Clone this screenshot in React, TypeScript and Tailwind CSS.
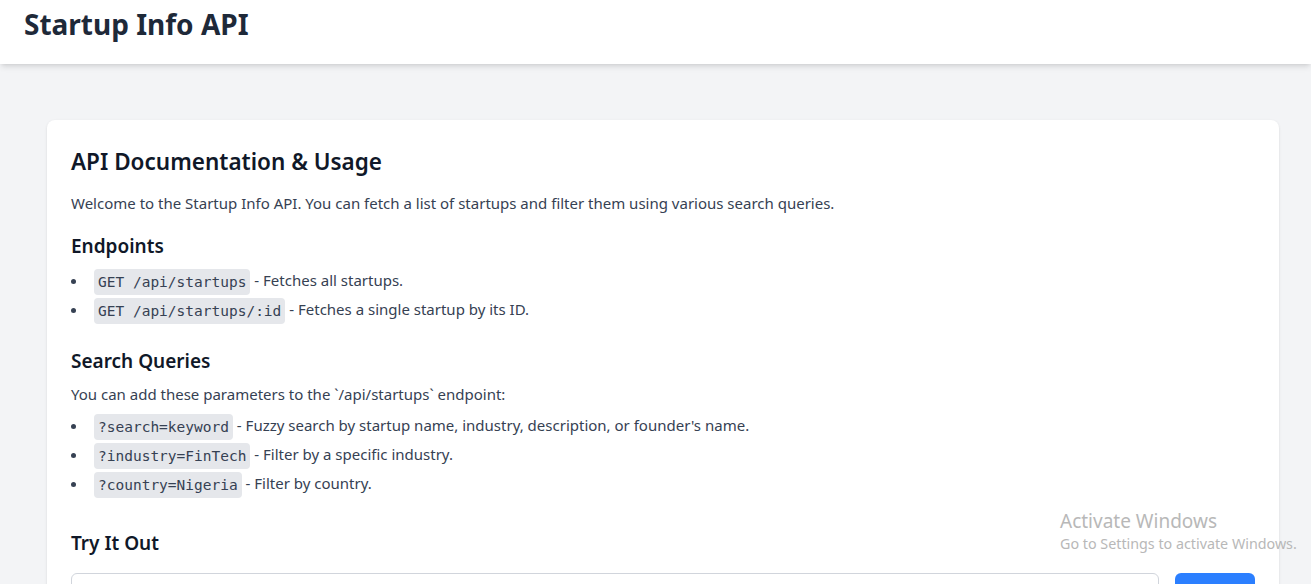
import React from 'react';

const sans = { fontFamily: '"Noto Sans", "Open Sans", sans-serif' };

const Code: React.FC<{ children: React.ReactNode }> = ({ children }) => (
  <code className="ml-[2px] inline-block rounded bg-gray-200 px-1 py-1 align-middle font-['DejaVu_Sans_Mono','Liberation_Mono',monospace] text-[14.5px] leading-[18px] text-gray-700">
    {children}
  </code>
);

const Item: React.FC<{ code: string; text: string }> = ({ code, text }) => (
  <li className="leading-[29px]">
    <Code>{code}</Code> - {text}
  </li>
);

export default function App() {
  return (
    <div className="relative min-h-screen bg-gray-100 font-['Noto_Sans','Open_Sans',sans-serif]" style={sans}>
      <header className="h-16 bg-white px-6 pt-[6px] shadow-md">
        <h1 className="text-[28px] font-bold leading-9 text-gray-800">Startup Info API</h1>
      </header>

      <main className="pl-[47px] pr-[32px] pt-14">
        <div className="rounded-lg bg-white px-6 pt-[26px] pb-6 shadow">
          <h2 className="mb-[13px] text-[22.5px] font-semibold leading-8 text-gray-900">API Documentation &amp; Usage</h2>
          <p className="mb-[17px] text-[15px] leading-6 text-gray-700">
            Welcome to the Startup Info API. You can fetch a list of startups and filter them using various search queries.
          </p>

          <h3 className="mb-1.5 text-[19px] font-semibold leading-7 text-gray-900">Endpoints</h3>
          <ul className="mb-[23px] list-inside list-disc text-[15px] text-gray-700">
            <Item code="GET /api/startups" text="Fetches all startups." />
            <Item code="GET /api/startups/:id" text="Fetches a single startup by its ID." />
          </ul>

          <h3 className="mb-[7px] text-[19px] font-semibold leading-7 text-gray-900">Search Queries</h3>
          <p className="text-[15px] leading-6 text-gray-700">
            You can add these parameters to the `/api/startups` endpoint:
          </p>
          <ul className="mt-[5px] list-inside list-disc text-[15px] text-gray-700">
            <Item code="?search=keyword" text="Fuzzy search by startup name, industry, description, or founder's name." />
            <Item code="?industry=FinTech" text="Filter by a specific industry." />
            <Item code="?country=Nigeria" text="Filter by country." />
          </ul>

          <h3 className="mt-[31px] mb-4 text-[19px] font-semibold leading-7 text-gray-900">Try It Out</h3>
          <div className="flex gap-4">
            <input
              type="text"
              placeholder="/api/startups?search=fintech"
              className="flex-1 rounded-md border border-gray-300 px-3 py-2 text-[15px]"
            />
            <button className="w-20 rounded-md bg-blue-500 py-2 text-[15px] font-semibold text-white">Fetch</button>
          </div>
        </div>
      </main>

      <div className="pointer-events-none absolute left-[1060px] top-[509px] text-[#b8b8b8]">
        <div className="text-[19px] leading-6">Activate Windows</div>
        <div className="mt-px text-[14.3px] leading-5">Go to Settings to activate Windows.</div>
      </div>
    </div>
  );
}
